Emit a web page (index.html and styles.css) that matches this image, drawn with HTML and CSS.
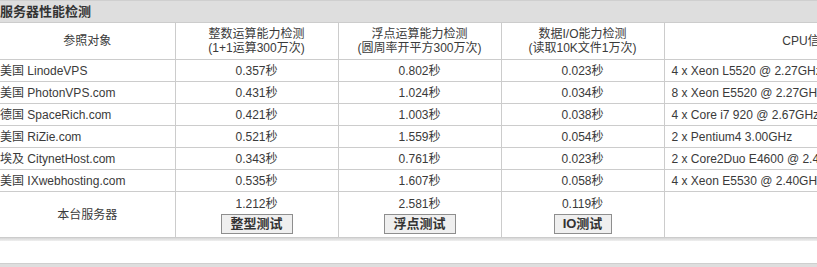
FILE: index.html
```html
<!DOCTYPE html>
<html>
<head>
<meta charset="utf-8">
<link rel="stylesheet" href="styles.css">
</head>
<body>
<div class="section">
  <div class="title">服务器性能检测</div>
  <table class="bench">
    <colgroup>
      <col class="c1"><col class="c2"><col class="c2"><col class="c2"><col class="c5">
    </colgroup>
    <tr class="head">
      <td>参照对象</td>
      <td>整数运算能力检测<br>(1+1运算300万次)</td>
      <td>浮点运算能力检测<br>(圆周率开平方300万次)</td>
      <td>数据I/O能力检测<br>(读取10K文件1万次)</td>
      <td>CPU信息</td>
    </tr>
    <tr><td class="name">美国 LinodeVPS</td><td>0.357秒</td><td>0.802秒</td><td>0.023秒</td><td class="cpu">4 x Xeon L5520 @ 2.27GHz</td></tr>
    <tr><td class="name">美国 PhotonVPS.com</td><td>0.431秒</td><td>1.024秒</td><td>0.034秒</td><td class="cpu">8 x Xeon E5520 @ 2.27GHz</td></tr>
    <tr><td class="name">德国 SpaceRich.com</td><td>0.421秒</td><td>1.003秒</td><td>0.038秒</td><td class="cpu">4 x Core i7 920 @ 2.67GHz</td></tr>
    <tr><td class="name">美国 RiZie.com</td><td>0.521秒</td><td>1.559秒</td><td>0.054秒</td><td class="cpu">2 x Pentium4 3.00GHz</td></tr>
    <tr><td class="name">埃及 CitynetHost.com</td><td>0.343秒</td><td>0.761秒</td><td>0.023秒</td><td class="cpu">2 x Core2Duo E4600 @ 2.40GHz</td></tr>
    <tr><td class="name">美国 IXwebhosting.com</td><td>0.535秒</td><td>1.607秒</td><td>0.058秒</td><td class="cpu">4 x Xeon E5530 @ 2.40GHz</td></tr>
    <tr class="local">
      <td>本台服务器</td>
      <td><div class="val">1.212秒</div><button class="btn">整型测试</button></td>
      <td><div class="val">2.581秒</div><button class="btn">浮点测试</button></td>
      <td><div class="val">0.119秒</div><button class="btn io">IO测试</button></td>
      <td></td>
    </tr>
  </table>
  <div class="shadow"></div>
</div>
<div class="section next">
  <div class="title"></div>
</div>
</body>
</html>
```
FILE: styles.css
```css
html, body {
  margin: 0;
  padding: 0;
  overflow: hidden;
  background: #fff;
}
body {
  font-family: "Liberation Sans", "Noto Sans CJK SC", sans-serif;
  font-size: 12px;
  color: #3a3a3a;
  width: 950px;
}
.title {
  height: 21px;
  border-top: 1px solid #cfcfcf;
  background: #dedede;
  font-size: 13px;
  font-weight: bold;
  line-height: 21px;
  color: #333;
  padding-left: 0;
}
.bench {
  border-collapse: collapse;
  table-layout: fixed;
  width: 950px;
}
.bench col.c1 { width: 175px; }
.bench col.c2 { width: 163px; }
.bench col.c5 { width: 286px; }
.bench td {
  border: 1px solid #cccccc;
  padding: 0;
  text-align: center;
  height: 21px;
  line-height: 14px;
  white-space: nowrap;
  overflow: hidden;
}
.bench td:first-child { border-left: none; }
.bench tr.head td { height: 36px; line-height: 14px; }
.bench td.name { text-align: left; padding-left: 0; }
.bench td.cpu { text-align: left; padding-left: 7px; }
.bench tr.local td { height: 45px; vertical-align: top; }
.bench tr.local td:first-child { vertical-align: middle; }
.val {
  margin-top: 5px;
  line-height: 14px;
}
.btn {
  display: inline-block;
  margin-top: 3px;
  height: 20px;
  width: 72px;
  padding: 0;
  border: 1px solid #8e8e8e;
  background: #efefef;
  font-family: "Liberation Sans", "Noto Sans CJK SC", sans-serif;
  font-size: 13px;
  font-weight: bold;
  color: #333;
  line-height: 18px;
}
.btn.io { width: 58px; }
.shadow {
  height: 3px;
  background: linear-gradient(#d6d6d6, #f0f0f0);
}
.next { margin-top: 22px; }
.next .title { height: 10px; }
```
